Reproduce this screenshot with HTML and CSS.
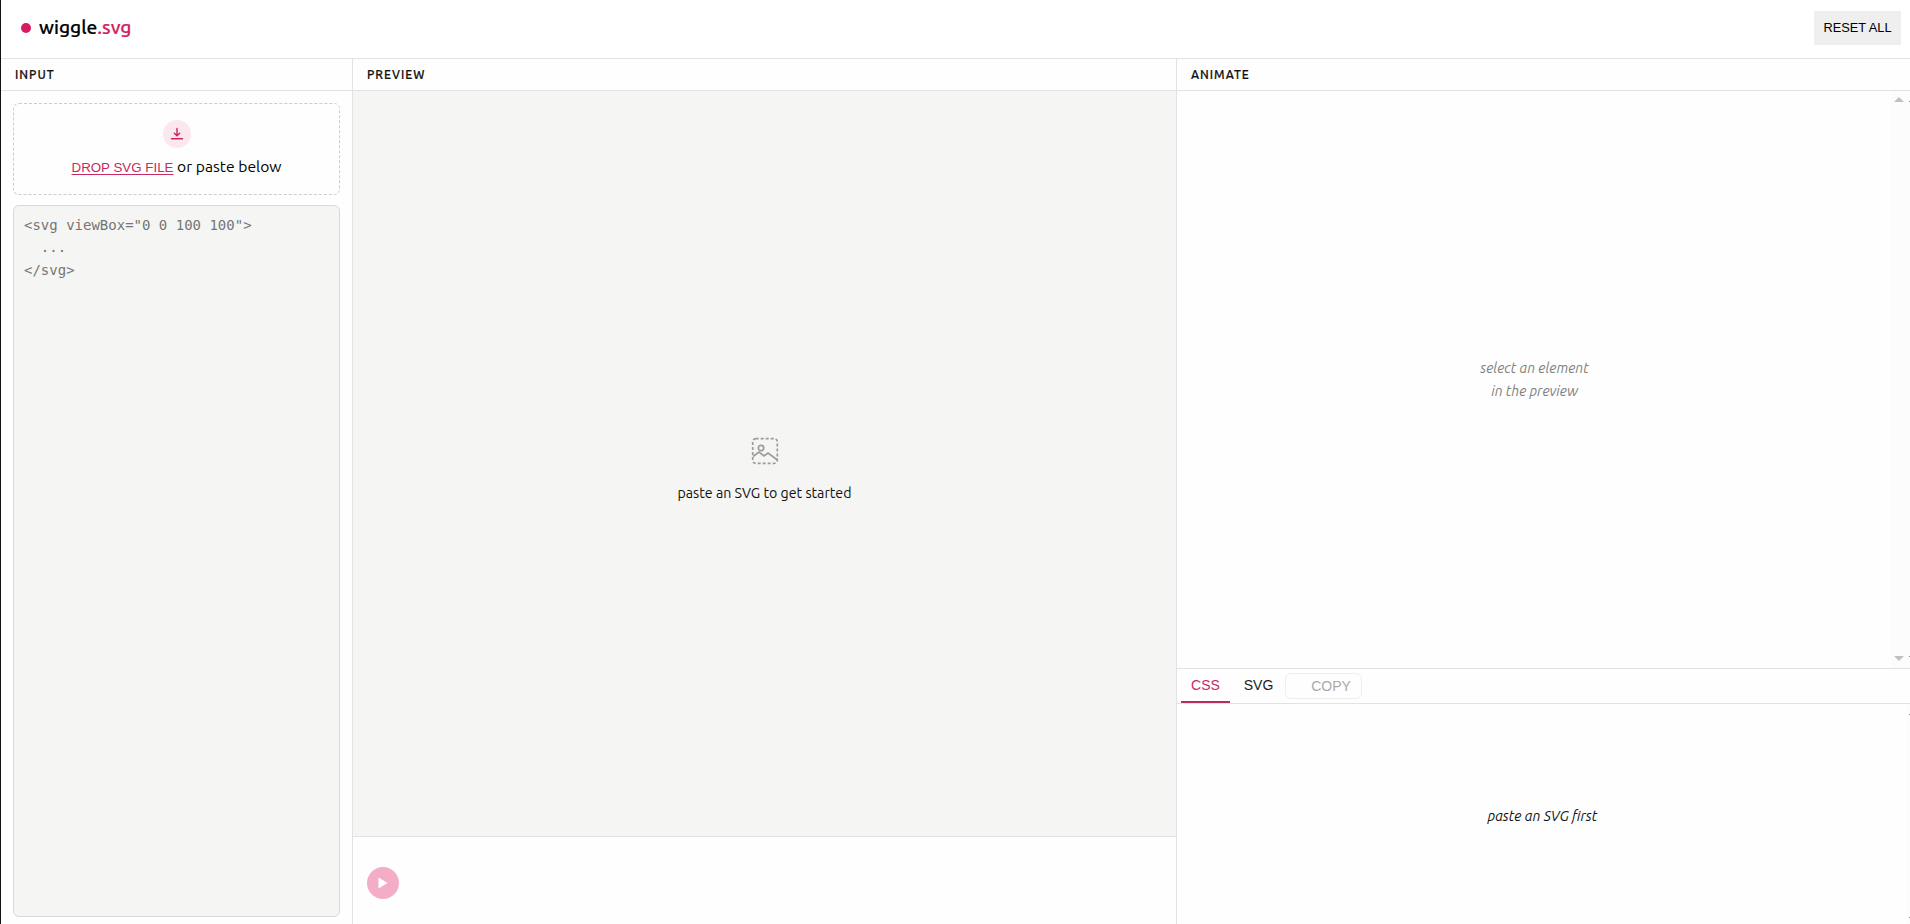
FILE: index.html
```html
<!DOCTYPE html>
<html lang="en">
<head>
    <meta charset="UTF-8">
    <meta name="viewport" content="width=device-width, initial-scale=1.0">
    <title>wiggle.svg</title>
    <link rel="stylesheet" href="styles.css">
</head>
<body>
    <header class="topbar">
        <div class="logo">
            <span class="logo-dot"></span>
            <span class="logo-name">wiggle<span class="logo-ext">.svg</span></span>
        </div>
        <button class="reset-btn">RESET ALL</button>
    </header>

    <main class="workspace">
        <section class="panel input-panel">
            <h2 class="panel-title">INPUT</h2>
            <div class="input-body">
                <div class="dropzone">
                    <span class="drop-icon">
                        <svg width="14" height="14" viewBox="0 0 14 14" fill="none" stroke="currentColor" stroke-width="1.4" stroke-linecap="round" stroke-linejoin="round">
                            <path d="M7 1.5v7M4.3 6.2L7 8.8l2.7-2.6M1.5 11.8h11"/>
                        </svg>
                    </span>
                    <p class="drop-text"><button class="file-btn">DROP SVG FILE</button> <span class="drop-hint">or paste below</span></p>
                </div>
                <textarea class="code-input" aria-label="SVG code" spellcheck="false" placeholder="&lt;svg viewBox=&quot;0 0 100 100&quot;&gt;&#10;  ...&#10;&lt;/svg&gt;"></textarea>
            </div>
        </section>

        <section class="panel preview-panel">
            <h2 class="panel-title">PREVIEW</h2>
            <div class="canvas">
                <svg class="empty-icon" width="28" height="28" viewBox="0 0 28 28" fill="none" stroke="currentColor" stroke-width="1.7">
                    <rect x="1.7" y="1.7" width="24.6" height="24.6" rx="3" stroke-dasharray="3 2"/>
                    <circle cx="10" cy="11" r="2.7"/>
                    <path d="M2 19.5l6-4.5 5 4 4-3 9.500 7"/>
                </svg>
                <p class="canvas-text">paste an SVG to get started</p>
            </div>
            <div class="playbar">
                <button class="play-btn" aria-label="Play" disabled>
                    <svg width="10" height="12" viewBox="0 0 10 12"><path d="M0.500 0.500v11l9-5.500z" fill="#fff"/></svg>
                </button>
            </div>
        </section>

        <section class="panel animate-panel">
            <h2 class="panel-title">ANIMATE</h2>
            <div class="animate-body">
                <p class="animate-empty">select an element<br>in the preview</p>
                <div class="scroll-track">
                    <span class="arrow-up"></span>
                    <span class="arrow-down"></span>
                </div>
                <div class="scroll-edge"></div>
            </div>
            <div class="tabs">
                <button class="tab active">CSS</button>
                <button class="tab">SVG</button>
                <button class="copy-btn" disabled>COPY</button>
            </div>
            <div class="output-body">
                <p class="output-empty">paste an SVG first</p>
                <div class="scroll-edge"></div>
            </div>
        </section>
    </main>
</body>
</html>
```

FILE: styles.css
```css
* {
    box-sizing: border-box;
}

body {
    margin: 0;
    height: 100vh;
    display: flex;
    flex-direction: column;
    border-left: 1px solid #111111;
    background-color: #fefefe;
    color: #111111;
    font-family: Ubuntu, "Noto Sans", sans-serif;
    font-size: 14.2px;
    overflow: hidden;
}

h2,
p {
    margin: 0;
}

button {
    font-family: "Liberation Sans", Arial, sans-serif;
    border: none;
    padding: 0;
}

/* header */

.topbar {
    height: 59px;
    flex-shrink: 0;
    display: flex;
    align-items: center;
    justify-content: space-between;
    padding: 0 9px 3px 20px;
    border-bottom: 1px solid #e2e2e2;
    background-color: #ffffff;
}

.logo {
    display: flex;
    align-items: center;
    gap: 8px;
}

.logo-dot {
    width: 10px;
    height: 10px;
    border-radius: 50%;
    background-color: #d81b60;
}

.logo-name {
    margin-top: -2px;
    font-size: 19.2px;
    font-weight: 500;
    color: #000000;
    -webkit-text-stroke: 0.2px currentColor;
}

.logo-ext {
    color: #d2215f;
}

.reset-btn {
    width: 87px;
    height: 34px;
    font-size: 12.8px;
    background-color: #efefef;
    color: #000000;
}

/* columns */

.workspace {
    flex: 1;
    min-height: 0;
    display: flex;
}

.panel {
    display: flex;
    flex-direction: column;
    min-width: 0;
}

.input-panel {
    width: 352px;
    border-right: 1px solid #e2e2e2;
}

.preview-panel {
    width: 824px;
    border-right: 1px solid #e2e2e2;
}

.animate-panel {
    flex: 1;
}

.panel-title {
    height: 32px;
    flex-shrink: 0;
    padding-left: 14px;
    border-bottom: 1px solid #e2e2e2;
    font-size: 12px;
    font-weight: 500;
    line-height: 31px;
    letter-spacing: 1px;
    color: #111111;
    -webkit-text-stroke: 0.2px currentColor;
}

/* input */

.input-body {
    flex: 1;
    display: flex;
    flex-direction: column;
    gap: 10px;
    padding: 12px 12px 7px;
}

.dropzone {
    height: 92px;
    display: flex;
    flex-direction: column;
    align-items: center;
    gap: 7px;
    padding-top: 16px;
    border: 1px dashed #cccccc;
    border-radius: 6px;
}

.drop-icon {
    width: 28px;
    height: 28px;
    display: flex;
    align-items: center;
    justify-content: center;
    border-radius: 50%;
    background-color: #fbe8ef;
    color: #d0225f;
}

.drop-text {
    font-size: 15.7px;
    line-height: 22px;
    white-space: nowrap;
    color: #000000;
}

.file-btn {
    background: none;
    color: #c92a62;
    font-size: 13.333px;
    text-decoration: underline;
    text-underline-offset: 2px;
}

.code-input {
    flex: 1;
    resize: none;
    padding: 8px 10px;
    border: 1px solid #d9d9d9;
    border-radius: 6px;
    background-color: #f5f5f3;
    font-family: "DejaVu Sans Mono", monospace;
    font-size: 14px;
    line-height: 22.4px;
}

.code-input::placeholder {
    color: #757575;
}

/* preview */

.canvas {
    flex: 1;
    display: flex;
    flex-direction: column;
    align-items: center;
    justify-content: center;
    gap: 17px;
    padding-top: 14px;
    background-color: #f5f5f3;
}

.empty-icon {
    color: #9c9c9b;
}

.canvas-text {
    line-height: 22px;
}

.playbar {
    height: 88px;
    display: flex;
    align-items: center;
    padding: 5px 14px 0;
    border-top: 1px solid #e2e2e2;
}

.play-btn {
    width: 32px;
    height: 32px;
    display: flex;
    align-items: center;
    justify-content: center;
    border-radius: 50%;
    background-color: #f3adc6;
}

/* animate */

.animate-body {
    flex: 1;
    display: flex;
}

.animate-empty {
    flex: 1;
    align-self: center;
    padding-left: 1px;
    text-align: center;
    font-size: 14.1px;
    font-style: italic;
    line-height: 23px;
    color: #808080;
}

.scroll-track {
    width: 18px;
    display: flex;
    flex-direction: column;
    justify-content: space-between;
    padding: 6px 0 7px 3px;
    background-color: #fcfcfc;
}

.arrow-up,
.arrow-down {
    width: 0;
    border: 5px solid transparent;
}

.arrow-up {
    border-top: none;
    border-bottom-color: #c1c1c1;
}

.arrow-down {
    border-bottom: none;
    border-top-color: #c1c1c1;
}

.scroll-edge {
    width: 1px;
    display: flex;
    flex-direction: column;
    justify-content: space-between;
    padding: 10px 0 11px;
    background-color: #fcfcfc;
}

.scroll-edge::before,
.scroll-edge::after {
    content: "";
    height: 1px;
    background-color: #8a8a8a;
}

.tabs {
    height: 36px;
    display: flex;
    gap: 3px;
    padding-left: 4px;
    border-top: 1px solid #e2e2e2;
    border-bottom: 1px solid #e2e2e2;
}

.tab {
    width: 49px;
    background: none;
    border-bottom: 2px solid transparent;
    color: #1c1c1c;
    font-size: 14px;
}

.tab + .tab {
    padding-left: 2px;
}

.tab.active {
    border-bottom-color: #b72d5c;
    color: #c92a62;
}

.copy-btn {
    width: 77px;
    height: 26px;
    margin-top: 4px;
    padding: 0 0 1px 15px;
    border: 1px solid #eeeeee;
    border-radius: 6px;
    background: none;
    color: #a9a9a9;
    font-size: 14px;
}

/* output */

.output-body {
    height: 220px;
    display: flex;
}

.output-body .scroll-edge {
    width: 4px;
    align-items: flex-end;
    padding: 10px 0 6px;
}

.output-body .scroll-edge::before,
.output-body .scroll-edge::after {
    width: 1px;
}

.output-empty {
    flex: 1;
    align-self: center;
    padding: 4px 0 0 2px;
    text-align: center;
    font-style: italic;
}
```
